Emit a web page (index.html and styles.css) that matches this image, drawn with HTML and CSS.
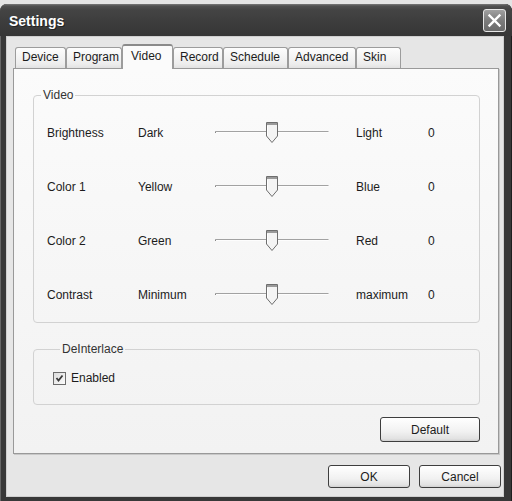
FILE: index.html
```html
<!DOCTYPE html>
<html>
<head>
<meta charset="utf-8">
<title>Settings</title>
<link rel="stylesheet" href="styles.css">
</head>
<body>
<div class="window">
  <div class="titlebar">
    <span class="title">Settings</span>
    <button class="close" aria-label="Close">
      <svg width="21" height="21" viewBox="0 0 21 21"><path d="M5.5 5.5 L15.5 15.5 M15.5 5.5 L5.5 15.5" stroke="#fff" stroke-width="2.4" stroke-linecap="square"/></svg>
    </button>
  </div>
  <div class="client">
    <div class="tabs">
      <div class="tab t-device">Device</div>
      <div class="tab t-program">Program</div>
      <div class="tab t-video selected">Video</div>
      <div class="tab t-record">Record</div>
      <div class="tab t-schedule">Schedule</div>
      <div class="tab t-advanced">Advanced</div>
      <div class="tab t-skin">Skin</div>
    </div>
    <div class="panel">
      <fieldset class="group video">
        <legend>Video</legend>
        <div class="grid">
          <span>Brightness</span><span>Dark</span>
          <svg class="slider" width="114" height="24" viewBox="0 0 114 24"><path d="M0.5 10.5 H113.5" stroke="#a2a2a2"/><path d="M1 11.5 H113.5" stroke="#fdfdfd"/><path d="M0.5 10.5 V12" stroke="#888"/><path d="M51.5 1.5 H62.5 V15 L57 21.5 L51.5 15 Z" fill="#f4f4f4" stroke="#6e6e6e"/><rect x="52" y="2" width="10" height="2" fill="#9a9a9a"/><path d="M52.5 5 V14.5" stroke="#fff"/></svg>
          <span>Light</span><span>0</span>

          <span>Color 1</span><span>Yellow</span>
          <svg class="slider" width="114" height="24" viewBox="0 0 114 24"><path d="M0.5 10.5 H113.5" stroke="#a2a2a2"/><path d="M1 11.5 H113.5" stroke="#fdfdfd"/><path d="M0.5 10.5 V12" stroke="#888"/><path d="M51.5 1.5 H62.5 V15 L57 21.5 L51.5 15 Z" fill="#f4f4f4" stroke="#6e6e6e"/><rect x="52" y="2" width="10" height="2" fill="#9a9a9a"/><path d="M52.5 5 V14.5" stroke="#fff"/></svg>
          <span>Blue</span><span>0</span>

          <span>Color 2</span><span>Green</span>
          <svg class="slider" width="114" height="24" viewBox="0 0 114 24"><path d="M0.5 10.5 H113.5" stroke="#a2a2a2"/><path d="M1 11.5 H113.5" stroke="#fdfdfd"/><path d="M0.5 10.5 V12" stroke="#888"/><path d="M51.5 1.5 H62.5 V15 L57 21.5 L51.5 15 Z" fill="#f4f4f4" stroke="#6e6e6e"/><rect x="52" y="2" width="10" height="2" fill="#9a9a9a"/><path d="M52.5 5 V14.5" stroke="#fff"/></svg>
          <span>Red</span><span>0</span>

          <span>Contrast</span><span>Minimum</span>
          <svg class="slider" width="114" height="24" viewBox="0 0 114 24"><path d="M0.5 10.5 H113.5" stroke="#a2a2a2"/><path d="M1 11.5 H113.5" stroke="#fdfdfd"/><path d="M0.5 10.5 V12" stroke="#888"/><path d="M51.5 1.5 H62.5 V15 L57 21.5 L51.5 15 Z" fill="#f4f4f4" stroke="#6e6e6e"/><rect x="52" y="2" width="10" height="2" fill="#9a9a9a"/><path d="M52.5 5 V14.5" stroke="#fff"/></svg>
          <span>maximum</span><span>0</span>
        </div>
      </fieldset>
      <fieldset class="group deint">
        <legend>DeInterlace</legend>
        <label class="check">
          <span class="box"><svg width="11" height="11" viewBox="0 0 11 11"><path d="M2.5 5 L4.5 7.5 L8.5 2.5" fill="none" stroke="#3a3a3a" stroke-width="1.8"/></svg></span>
          <span>Enabled</span>
        </label>
      </fieldset>
      <button class="btn default">Default</button>
    </div>
    <div class="actions">
      <button class="btn">OK</button>
      <button class="btn">Cancel</button>
    </div>
  </div>
</div>
</body>
</html>
```
FILE: styles.css
```css
* { box-sizing: border-box; }
html, body { margin: 0; padding: 0; }
body {
  width: 512px;
  height: 501px;
  overflow: hidden;
  background: #e4e4e4;
  font-family: "Liberation Sans", Arial, sans-serif;
  font-size: 12px;
  color: #1c1c1c;
}
.window {
  margin-top: 4px;
  height: 497px;
  background: #383838;
  border-radius: 7px 7px 0 0;
  display: flex;
  flex-direction: column;
  box-shadow: inset 1px 0 #666, inset -1px 0 #1e1e1e;
}
.titlebar {
  flex: none;
  height: 32px;
  display: flex;
  align-items: flex-start;
  border-radius: 7px 7px 0 0;
  background: linear-gradient(to bottom, #7a7a7a 0, #505050 2px, #444 6px, #3c3c3c 60%, #363636 100%);
}
.title {
  margin: 9px 0 0 9px;
  font-weight: bold;
  font-size: 14px;
  line-height: 17px;
  color: #fff;
  text-shadow: 1px 1px 0 #222;
}
.close {
  margin: 5px 6px 0 auto;
  width: 23px;
  height: 23px;
  padding: 0;
  border: 1px solid #e6e6e6;
  border-radius: 3px;
  background: linear-gradient(to bottom, #a0a0a0, #7c7c7c 50%, #6a6a6a);
  display: flex;
  align-items: center;
  justify-content: center;
}
.close svg { display: block; }
.client {
  flex: 1;
  margin: 0 8px 4px 6px;
  background: #e6e6e6;
  padding: 8px 3px 0 7px;
  display: flex;
  flex-direction: column;
  box-shadow: inset 0 0 0 1px #cfcfcf;
}
.tabs {
  height: 24px;
  margin-left: 2px;
  display: flex;
  align-items: flex-end;
}
.tab {
  height: 21px;
  padding-left: 6px;
  line-height: 19px;
  border: 1px solid #9c9c9c;
  border-bottom: none;
  border-radius: 3px 3px 0 0;
  background: linear-gradient(to bottom, #fdfdfd, #ededed 80%, #e2e2e2);
  white-space: nowrap;
}
.tab.selected {
  height: 25px;
  margin-bottom: -1px;
  padding-left: 8px;
  line-height: 21px;
  position: relative;
  z-index: 1;
  border-top: 2px solid #8a8a8a;
  background: #fbfbfb;
}
.t-device { width: 51px; }
.t-program { width: 56px; }
.t-video { width: 51px; }
.t-record { width: 50px; }
.t-schedule { width: 65px; }
.t-advanced { width: 68px; }
.t-skin { width: 45px; }
.panel {
  width: 486px;
  height: 386px;
  flex: none;
  border: 1px solid #999;
  background: linear-gradient(to bottom, #fbfbfb, #f2f2f2);
  padding: 19px 18px 0 19px;
  display: flex;
  flex-direction: column;
  box-shadow: 1px 1px 0 #c8c8c8;
}
.group {
  margin: 0;
  padding: 0;
  min-width: 0;
  border: 1px solid #d2d2d2;
  border-radius: 4px;
}
.group legend {
  margin-left: 7px;
  padding: 0 2px;
  line-height: 14px;
  color: #333;
}
.grid {
  padding: 4px 0 0 13px;
  display: grid;
  grid-template-columns: 91px 77px 141px 72px 1fr;
  grid-auto-rows: 54px;
  align-items: center;
  line-height: 14px;
}
.slider { display: block; }
.deint {
  margin-top: 19px;
  padding: 15px 0 19px 19px;
}
.check {
  display: flex;
  align-items: center;
  gap: 5px;
  line-height: 14px;
}
.box {
  width: 13px;
  height: 13px;
  border: 1px solid #6c6c6c;
  background: linear-gradient(to bottom right, #dcdcdc, #fcfcfc);
  display: flex;
  align-items: center;
  justify-content: center;
}
.box svg { display: block; }
.btn {
  font-family: "Liberation Sans", Arial, sans-serif;
  font-size: 12px;
  color: #1c1c1c;
  padding: 0;
  border: 1px solid #3e3e3e;
  border-radius: 3px;
  background: linear-gradient(to bottom, #ffffff, #f1f1f1 60%, #e2e2e2 90%, #d0d0d0);
  width: 82px;
  height: 23px;
}
.btn.default {
  align-self: flex-end;
  margin-top: 12px;
  width: 100px;
  height: 25px;
}
.actions {
  margin-top: 11px;
  display: flex;
  justify-content: flex-end;
  gap: 9px;
}
```
